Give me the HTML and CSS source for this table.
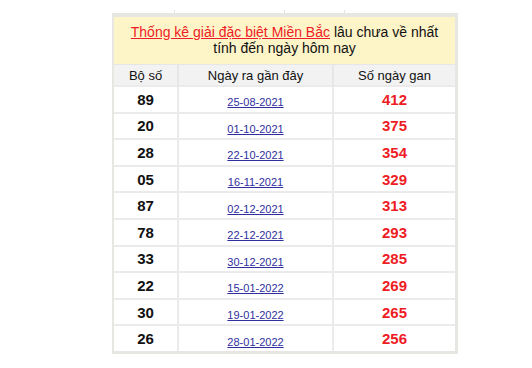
FILE: index.html
```html
<!DOCTYPE html>
<html lang="vi">
<head>
<meta charset="utf-8">
<link rel="stylesheet" href="styles.css">
</head>
<body>
<div class="wrap">
  <div class="prev"><span></span><span></span><span></span><span></span></div>
  <div class="frame">
    <div class="title"><a href="#" class="title-link">Thống kê giải đặc biệt Miền Bắc</a> lâu chưa về nhất<br>tính đến ngày hôm nay</div>
    <table class="gan">
      <colgroup><col class="c1"><col class="c2"><col class="c3"></colgroup>
      <thead>
        <tr><th>Bộ số</th><th>Ngày ra gần đây</th><th>Số ngày gan</th></tr>
      </thead>
      <tbody>
        <tr><td class="num">89</td><td><a href="#" class="date">25-08-2021</a></td><td class="gd">412</td></tr>
        <tr><td class="num">20</td><td><a href="#" class="date">01-10-2021</a></td><td class="gd">375</td></tr>
        <tr><td class="num">28</td><td><a href="#" class="date">22-10-2021</a></td><td class="gd">354</td></tr>
        <tr><td class="num">05</td><td><a href="#" class="date">16-11-2021</a></td><td class="gd">329</td></tr>
        <tr><td class="num">87</td><td><a href="#" class="date">02-12-2021</a></td><td class="gd">313</td></tr>
        <tr><td class="num">78</td><td><a href="#" class="date">22-12-2021</a></td><td class="gd">293</td></tr>
        <tr><td class="num">33</td><td><a href="#" class="date">30-12-2021</a></td><td class="gd">285</td></tr>
        <tr><td class="num">22</td><td><a href="#" class="date">15-01-2022</a></td><td class="gd">269</td></tr>
        <tr><td class="num">30</td><td><a href="#" class="date">19-01-2022</a></td><td class="gd">265</td></tr>
        <tr><td class="num">26</td><td><a href="#" class="date">28-01-2022</a></td><td class="gd">256</td></tr>
      </tbody>
    </table>
  </div>
</div>
</body>
</html>
```

FILE: styles.css
```css
html, body {
  margin: 0;
  padding: 0;
  background: #ffffff;
}
body {
  font-family: "Liberation Sans", Arial, sans-serif;
  color: #111;
}
.wrap {
  width: 346px;
  margin: 10px 0 0 112px;
}
.prev {
  display: flex;
  height: 3px;
}
.prev span {
  border-right: 1px solid #e4e4e4;
}
.prev span:nth-child(1) { width: 62px; }
.prev span:nth-child(2) { width: 109px; }
.prev span:nth-child(3) { width: 59px; }
.prev span:nth-child(4) { flex: 1; border-right: none; }
.frame {
  border: 2px solid #e7e6e3;
  border-top-width: 4px;
  border-right-width: 3px;
  border-bottom-width: 3px;
}
.title {
  background: #fdf4c8;
  text-align: center;
  font-size: 14px;
  line-height: 16px;
  padding: 7px 4px 8px;
  color: #111;
}
.title-link {
  color: #ee1c25;
  text-decoration: underline;
}
.gan {
  width: 100%;
  border-collapse: collapse;
  table-layout: fixed;
}
.c1 { width: 64px; }
.c2 { width: 155px; }
.c3 { width: auto; }
.gan th {
  background: #f2f2f2;
  font-weight: normal;
  font-size: 13px;
  height: 20px;
  padding: 0;
  color: #111;
  border-top: 1px solid #e6e6e6;
  border-left: 2px solid #e6e6e6;
}
.gan td {
  height: 24.6px;
  padding: 0;
  text-align: center;
  border-top: 2px solid #ebebeb;
  border-left: 2px solid #ebebeb;
}
.gan th:first-child, .gan td:first-child {
  border-left: none;
}
.num {
  font-weight: bold;
  font-size: 15px;
  color: #111;
}
.gd {
  font-weight: bold;
  font-size: 15px;
  color: #ee1c25;
}
.date {
  font-size: 11px;
  color: #2f2fa0;
  text-decoration: underline;
  position: relative;
  top: 2px;
}
```
